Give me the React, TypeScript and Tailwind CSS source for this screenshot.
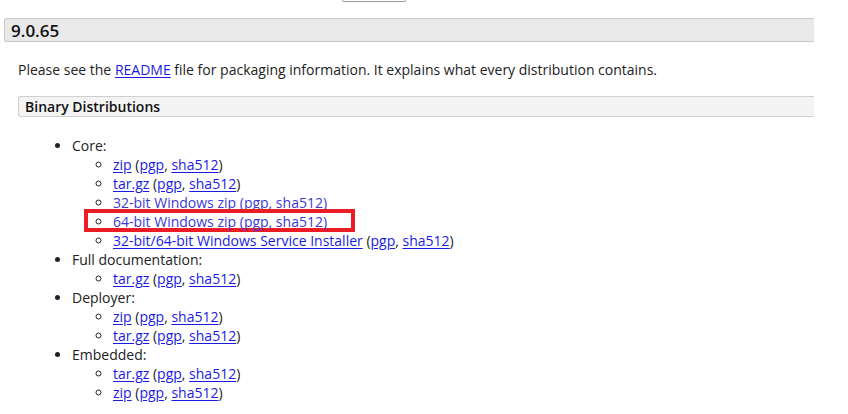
import React from 'react';

type Item = { label: string; plain?: boolean; boxed?: boolean };

const groups: { title: string; items: Item[] }[] = [
  {
    title: 'Core:',
    items: [
      { label: 'zip' },
      { label: 'tar.gz' },
      { label: '32-bit Windows zip', plain: true },
      { label: '64-bit Windows zip', plain: true, boxed: true },
      { label: '32-bit/64-bit Windows Service Installer' },
    ],
  },
  { title: 'Full documentation:', items: [{ label: 'tar.gz' }] },
  { title: 'Deployer:', items: [{ label: 'zip' }, { label: 'tar.gz' }] },
  { title: 'Embedded:', items: [{ label: 'tar.gz' }, { label: 'zip' }] },
];

const Link = ({ children }: { children: React.ReactNode }) => (
  <a href="#" className="text-[#1a1ae6] underline underline-offset-2">
    {children}
  </a>
);

const Download = ({ item }: { item: Item }) => {
  if (item.plain) {
    return (
      <span className="relative text-[#3a3ad6]">
        {item.label} (pgp, sha512)
      </span>
    );
  }
  return (
    <span>
      <Link>{item.label}</Link> (<Link>pgp</Link>, <Link>sha512</Link>)
    </span>
  );
};

export default function App() {
  return (
    <div className="w-[848px] h-[414px] overflow-hidden bg-white text-[#222] font-['Open_Sans',sans-serif] text-[14px] leading-[19px]">
      <div className="ml-[342px] w-[64px] h-[2px] border-x border-b border-[#999] rounded-b-[2px]" />

      <div className="ml-[4px] mt-[16px] w-[810px] h-[24px] flex items-center pl-[6px] bg-[#e9e9e9] border-y border-l border-[#c8c8c8] rounded-l-[3px]">
        <h2 className="text-[17px] font-semibold text-[#111]">9.0.65</h2>
      </div>

      <p className="ml-[18px] mt-[18px]">
        Please see the <Link>README</Link> file for packaging information. It explains what every distribution contains.
      </p>

      <div className="ml-[18px] mt-[17px] w-[796px] h-[21px] flex items-center pl-[6px] bg-[#f4f4f4] border-y border-l border-[#cfcfcf] rounded-l-[3px]">
        <h3 className="text-[14px] font-semibold text-[#111]">Binary Distributions</h3>
      </div>

      <ul className="list-disc pl-[72px] mt-[19px]">
        {groups.map((g) => (
          <li key={g.title}>
            {g.title}
            <ul className="list-[circle] pl-[41px]">
              {g.items.map((it, i) => (
                <li key={i} className={it.boxed ? 'relative' : ''}>
                  {it.boxed && (
                    <span className="absolute left-[-29px] top-[-3px] w-[271px] h-[23px] border-4 border-[#ec1c24] pointer-events-none" />
                  )}
                  <Download item={it} />
                </li>
              ))}
            </ul>
          </li>
        ))}
      </ul>
    </div>
  );
}
